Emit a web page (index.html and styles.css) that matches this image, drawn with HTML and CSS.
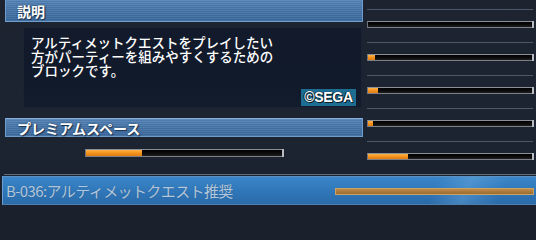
FILE: index.html
```html
<!DOCTYPE html>
<html lang="ja">
<head>
<meta charset="utf-8">
<link rel="stylesheet" href="styles.css">
</head>
<body>
<div class="screen">
  <div class="top">
    <div class="left">
      <div class="hdr hdr-first"><span>説明</span></div>
      <div class="desc">
        <p class="line">アルティメットクエストをプレイしたい</p>
        <p class="line">方がパーティーを組みやすくするための</p>
        <p class="line">ブロックです。</p>
        <div class="sega">©SEGA</div>
      </div>
      <div class="hdr hdr-second"><span>プレミアムスペース</span></div>
      <div class="bar pbar"><div class="fill" style="width:56px"></div></div>
    </div>
    <div class="right">
      <div class="row"><div class="sep"></div><div class="bar"><div class="fill" style="width:0px"></div></div></div>
      <div class="row"><div class="sep"></div><div class="bar"><div class="fill" style="width:7px"></div></div></div>
      <div class="row"><div class="sep"></div><div class="bar"><div class="fill" style="width:10px"></div></div></div>
      <div class="row"><div class="sep"></div><div class="bar"><div class="fill" style="width:5px"></div></div></div>
      <div class="row"><div class="sep"></div><div class="bar"><div class="fill" style="width:40px"></div></div></div>
    </div>
  </div>
  <div class="bottom-sep"></div>
  <div class="block">
    <span class="block-name">B-036:アルティメットクエスト推奨</span>
    <div class="gold"></div>
  </div>
</div>
</body>
</html>
```
FILE: styles.css
```css
html, body {
  margin: 0;
  padding: 0;
  background: #1a212c;
}
body {
  width: 536px;
  height: 208px;
  overflow: hidden;
  font-family: "Noto Sans CJK JP", "Noto Sans", sans-serif;
}
.screen {
  width: 536px;
  height: 208px;
  overflow: hidden;
  background: linear-gradient(180deg, #1d2430 0%, #1c2432 70%, #1a212c 100%);
}
.top {
  display: flex;
  height: 174px;
}
.left {
  width: 363px;
  display: flex;
  flex-direction: column;
}
.hdr {
  margin-left: 5px;
  box-sizing: border-box;
  border: 1px solid #6f9ccb;
  border-top-color: #86b0da;
  background:
    repeating-linear-gradient(180deg, rgba(255,255,255,0.05) 0 1px, rgba(0,0,0,0.05) 1px 2px),
    linear-gradient(180deg, #5585b8 0%, #4776aa 45%, #3c6a9e 100%);
  color: #ffffff;
  font-weight: bold;
  font-size: 14px;
  line-height: 1;
  display: flex;
  align-items: center;
  padding-left: 11px;
  text-shadow: 0 0 2px #1b3350, 1px 1px 1px #1b3350;
}
.hdr-first {
  height: 22px;
  border-top: none;
}
.hdr-second {
  height: 19px;
  margin-top: 10px;
}
.desc {
  position: relative;
  margin: 5px 1px 0 23px;
  height: 81px;
  padding-top: 8px;
  box-sizing: border-box;
  background: linear-gradient(180deg, #121a2b 0%, #111a2a 60%, #131c2c 100%);
  box-shadow: inset 0 0 0 1px #1a2333;
}
.line {
  margin: 0;
  padding-left: 8px;
  color: #ffffff;
  font-size: 13.5px;
  font-weight: 500;
  line-height: 14px;
  white-space: nowrap;
}
.sega {
  position: absolute;
  right: 6px;
  bottom: 2px;
  width: 55px;
  height: 17px;
  background: #1d6d93;
  color: #ffffff;
  font-family: "Liberation Sans", Arial, sans-serif;
  font-weight: bold;
  font-size: 14px;
  line-height: 17px;
  text-align: center;
  letter-spacing: -0.3px;
  text-shadow: 0 0 1px #0b1e2a, 1px 1px 0 #0b1e2a, -1px 0 0 #0b1e2a;
}
.bar {
  position: relative;
  box-sizing: border-box;
  height: 7px;
  border-top: 1px solid #8c9096;
  border-bottom: 1px solid #7d8086;
  border-left: 1px solid #70747a;
  background: linear-gradient(180deg, #000000 0%, #0b0b0b 50%, #1e1e1e 100%);
}
.bar::after {
  content: "";
  position: absolute;
  right: -1px;
  top: -1px;
  width: 2px;
  height: 7px;
  background: #b8bcc2;
}
.fill {
  height: 100%;
  background: linear-gradient(180deg, #ffb347 0%, #f3921e 50%, #e07e10 100%);
}
.pbar {
  margin: 12px 0 0 85px;
  width: 198px;
  height: 8px;
}
.pbar::after {
  height: 8px;
}
.right {
  margin-left: 4px;
  width: 166px;
  padding-top: 9px;
}
.row {
  height: 33px;
}
.sep {
  height: 1px;
  background: #4d5868;
  margin-bottom: 11px;
}
.bottom-sep {
  height: 1px;
  margin-left: 4px;
  background: #5f6c7e;
}
.block {
  margin-top: 1px;
  margin-left: 2px;
  height: 29px;
  display: flex;
  align-items: center;
  justify-content: space-between;
  box-sizing: border-box;
  border-top: 1px solid #5b92c6;
  border-left: 1px solid #6aa0d2;
  border-bottom: 1px solid #4f7fae;
  background:
    linear-gradient(115deg, rgba(255,255,255,0) 80%, rgba(120,180,230,0.35) 86%, rgba(255,255,255,0) 93%),
    linear-gradient(180deg, #3a86c8 0%, #2f76b8 55%, #2a6aa8 100%);
}
.block-name {
  padding-left: 3px;
  color: #b3c6da;
  font-size: 15px;
  line-height: 1;
  letter-spacing: -0.6px;
  text-shadow: 0 0 1px #2a5a8a;
}
.gold {
  width: 199px;
  height: 7px;
  margin-right: 2px;
  margin-top: 2px;
  box-sizing: border-box;
  border: 1px solid #c9a266;
  background: linear-gradient(180deg, #c08a4a 0%, #a87838 60%, #9a6d34 100%);
}
```
